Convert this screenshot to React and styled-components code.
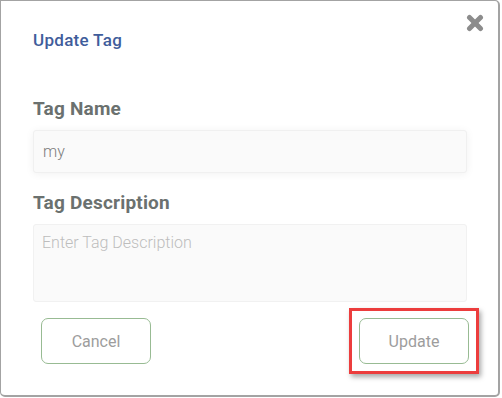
import React, { useState } from "react";
import styled, { createGlobalStyle } from "styled-components";

const GlobalStyle = createGlobalStyle`
  html, body {
    margin: 0;
    padding: 0;
    background: #ffffff;
  }
  * {
    box-sizing: border-box;
  }
`;

const Modal = styled.div`
  position: relative;
  width: 500px;
  height: 397px;
  background: #ffffff;
  border: 1px solid #a3a3a3;
  border-right-width: 2px;
  border-bottom-width: 2px;
  border-radius: 0 5px 5px 5px;
  font-family: Roboto, "Liberation Sans", sans-serif;
  padding: 0 31px 0 32px;
`;

const Header = styled.div`
  display: flex;
  justify-content: space-between;
  align-items: flex-start;
  padding-top: 28px;
`;

const Title = styled.h4`
  margin: 0;
  font-size: 17px;
  line-height: 22px;
  font-weight: 500;
  letter-spacing: 0.3px;
  color: #3f5d9b;
`;

const CloseButton = styled.button`
  position: absolute;
  top: 12px;
  right: 13px;
  width: 20px;
  height: 20px;
  padding: 0;
  border: none;
  background: transparent;
  cursor: pointer;
  display: flex;
  align-items: center;
  justify-content: center;
`;

const Field = styled.div`
  display: flex;
  flex-direction: column;
  margin-top: ${(p) => p.$top}px;
`;

const Label = styled.label`
  font-size: 19px;
  line-height: 24px;
  font-weight: 700;
  letter-spacing: 0.2px;
  color: #6b716f;
  margin-bottom: 9px;
`;

const TextInput = styled.input`
  width: 100%;
  height: 43px;
  border: 1px solid #f0f0f0;
  border-radius: 3px;
  background: #fafafa;
  box-shadow: 0 1px 8px rgba(0, 0, 0, 0.06);
  padding: 0 9px;
  font-family: Roboto, "Liberation Sans", sans-serif;
  font-size: 16px;
  font-weight: 300;
  color: #7c7c7c;
  outline: none;
`;

const TextArea = styled.textarea`
  width: 100%;
  height: 78px;
  border: 1px solid #f1f1f1;
  border-radius: 3px;
  background: #fafafa;
  padding: 8px 8px;
  font-family: Roboto, "Liberation Sans", sans-serif;
  font-size: 16px;
  line-height: 19px;
  font-weight: 300;
  color: #7c7c7c;
  resize: none;
  outline: none;

  &::placeholder {
    color: #bdbdbd;
  }
`;

const Footer = styled.div`
  display: flex;
  justify-content: space-between;
  align-items: center;
  margin-top: 16px;
  padding-left: 8px;
`;

const Button = styled.button`
  width: 110px;
  height: 46px;
  background: #ffffff;
  border: 1px solid #98bb93;
  border-radius: 7px;
  font-family: Roboto, "Liberation Sans", sans-serif;
  font-size: 16px;
  font-weight: 400;
  color: #9d9d9d;
  cursor: pointer;
`;

const Highlight = styled.div`
  margin: -10px -12px -10px 0;
  padding: 7px;
  border: 3px solid #ec3d3d;
  box-shadow: 2px 3px 5px rgba(0, 0, 0, 0.35);
`;

const CloseIcon = () => (
  <svg width="18" height="18" viewBox="0 0 18 18">
    <g stroke="#8c8c8c" strokeWidth="5" strokeLinecap="round">
      <line x1="3.5" y1="3.5" x2="14.5" y2="14.5" />
      <line x1="14.5" y1="3.5" x2="3.5" y2="14.5" />
    </g>
  </svg>
);

const App = () => {
  const [name, setName] = useState("my");
  const [desc, setDesc] = useState("");

  return (
    <>
      <GlobalStyle />
      <Modal>
        <Header>
          <Title>Update Tag</Title>
          <CloseButton aria-label="close">
            <CloseIcon />
          </CloseButton>
        </Header>
        <Field $top={46}>
          <Label>Tag Name</Label>
          <TextInput value={name} onChange={(e) => setName(e.target.value)} />
        </Field>
        <Field $top={18}>
          <Label>Tag Description</Label>
          <TextArea
            placeholder="Enter Tag Description"
            value={desc}
            onChange={(e) => setDesc(e.target.value)}
          />
        </Field>
        <Footer>
          <Button>Cancel</Button>
          <Highlight>
            <Button>Update</Button>
          </Highlight>
        </Footer>
      </Modal>
    </>
  );
};

export default App;
